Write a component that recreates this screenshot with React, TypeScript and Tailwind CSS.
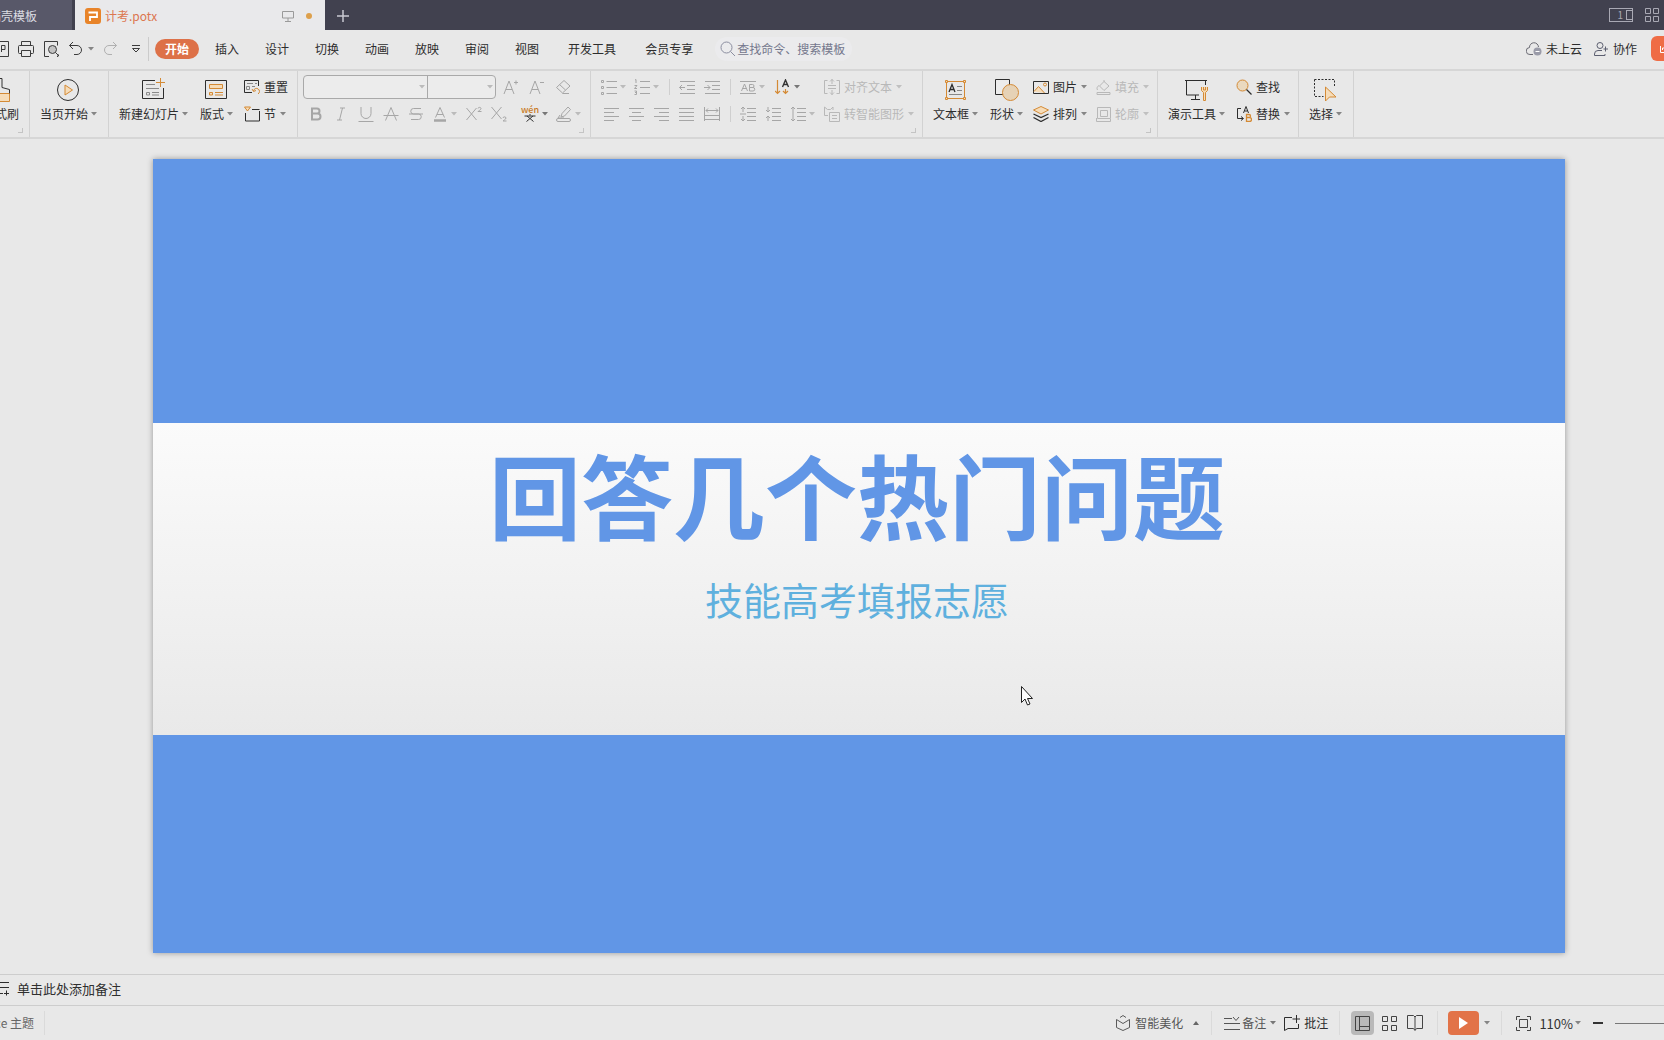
import type { ReactNode } from "react";
import clsx from "clsx";

type IconProps = {
  size?: number;
  className?: string;
  children: ReactNode;
};

const Icon = ({ size = 16, className, children }: IconProps) => (
  <svg
    width={size}
    height={size}
    viewBox={`0 0 ${size} ${size}`}
    fill="none"
    stroke="currentColor"
    strokeWidth={1}
    aria-hidden="true"
    className={clsx("shrink-0", className)}
  >
    {children}
  </svg>
);

const Caret = ({ up, className }: { up?: boolean; className?: string }) => (
  <svg
    width={6}
    height={4}
    viewBox="0 0 6 4"
    fill="currentColor"
    aria-hidden="true"
    className={clsx("shrink-0", className ?? "text-[#858585]")}
  >
    <path d={up ? "M0 4h6L3 0z" : "M0 0h6L3 3.6z"} />
  </svg>
);

const orange = "#d48a35";
const peach = "#f6dcb8";

/* ---------- ribbon building blocks ---------- */

const Group = ({
  className,
  corner,
  children,
}: {
  className?: string;
  corner?: boolean;
  children: ReactNode;
}) => (
  <div
    className={clsx(
      "relative flex h-[66px] shrink-0 items-start border-r border-[#d2d2d2]",
      className
    )}
  >
    {children}
    {corner && (
      <span className="absolute right-1.5 bottom-1 h-[5px] w-[5px] border-r border-b border-[#c4c4c4]" />
    )}
  </div>
);

const BigButton = ({
  icon,
  label,
  caret = true,
}: {
  icon: ReactNode;
  label: string;
  caret?: boolean;
}) => (
  <button className="flex shrink-0 flex-col items-center gap-1 pt-[7px]">
    {icon}
    <span className="flex items-center gap-[3px] leading-4 whitespace-nowrap">
      {label}
      {caret && <Caret />}
    </span>
  </button>
);

const SmallButton = ({
  icon,
  label,
  caret = true,
  disabled,
}: {
  icon: ReactNode;
  label: string;
  caret?: boolean;
  disabled?: boolean;
}) => (
  <button
    disabled={disabled}
    className={clsx(
      "flex h-5 items-center gap-1 whitespace-nowrap",
      disabled && "text-[#b8b8b8]"
    )}
  >
    {icon}
    {label}
    {caret && (
      <Caret className={disabled ? "text-[#c0c0c0]" : "text-[#858585]"} />
    )}
  </button>
);

const Tool = ({
  name,
  className,
  caret,
  active,
  children,
}: {
  name: string;
  className?: string;
  caret?: boolean;
  active?: boolean;
  children: ReactNode;
}) => (
  <button
    aria-label={name}
    disabled={!active}
    className={clsx(
      "flex h-5 shrink-0 items-center gap-[3px]",
      active ? "text-[#333]" : "text-[#a6a6a6]",
      className
    )}
  >
    {children}
    {caret && <Caret className={active ? "text-[#777]" : "text-[#bbb]"} />}
  </button>
);

const Rows = ({ className, children }: { className?: string; children: ReactNode }) => (
  <div className={clsx("flex flex-col gap-[7px] pt-1.5", className)}>{children}</div>
);

const Split = () => <span className="mx-[9px] h-4 w-px shrink-0 bg-[#cfcfcf]" />;

/* ---------- title bar ---------- */

const TitleBar = () => (
  <header className="flex h-[30px] items-stretch overflow-hidden bg-[#41414f]">
    <button className="flex w-[72px] shrink-0 items-center justify-end overflow-hidden bg-[#585869] pt-0.5 pr-[35px] whitespace-nowrap text-[#dcdce2]">
      稻壳模板
    </button>
    <div className="ml-[3px] flex w-[250px] shrink-0 items-center bg-[#e9e9eb] pt-0.5 pr-[13px] pl-2.5">
      <Icon size={16}>
        <rect width="16" height="16" rx="3" fill="#e8842a" stroke="none" />
        <path d="M3.500 4.500h8.500v4.500H5v4" stroke="#fff" strokeWidth="1.800" />
      </Icon>
      <span className="ml-1 text-[#dc7650]">计考.potx</span>
      <Icon size={12} className="ml-auto text-[#9a9a9a]">
        <path d="M.5 1.500h11v6.500h-11zM6 8v3M3 11.500h6" />
      </Icon>
      <span className="ml-3 h-1.5 w-1.5 rounded-full bg-[#dda04c]" />
    </div>
    <button aria-label="新建标签" className="ml-3 pt-0.5 text-[#c9c9d2]">
      <Icon size={12}>
        <path d="M6 0v12M0 6h12" strokeWidth="1.500" />
      </Icon>
    </button>
    <div className="ml-auto flex items-center gap-3 pr-1 text-[#a9a9b4]">
      <button
        aria-label="窗口"
        className="flex h-3.5 w-6 items-center justify-end border border-current text-[10px] leading-3"
      >
        1
        <span className="ml-[3px] h-2.5 w-1.5 border-y border-l border-current" />
      </button>
      <button aria-label="应用">
        <Icon size={15}>
          <path d="M.5.5h5v5h-5zM8.500.5h5v5h-5zM.5 8.500h5v5h-5zM8.500 8.500h5v5h-5z" />
        </Icon>
      </button>
    </div>
  </header>
);

/* ---------- menu bar ---------- */

const menuItems = ["插入", "设计", "切换", "动画", "放映", "审阅", "视图"];

const MenuBar = () => (
  <nav className="flex h-[39px] items-center overflow-hidden pb-0.5">
    <div className="flex shrink-0 items-center text-[#3c3c3c]">
      <button aria-label="输出为PDF" className="flex w-[9px] justify-end">
        <Icon>
          <path d="M4.500.5h11v15h-11M8.500 11V4.500h3.500v4H8.500" />
        </Icon>
      </button>
      <button aria-label="打印" className="ml-[9px]">
        <Icon>
          <path d="M3.500 4.500V.5h9v4M3.500 12.500h-2a1 1 0 0 1-1-1v-6a1 1 0 0 1 1-1h13a1 1 0 0 1 1 1v6a1 1 0 0 1-1 1h-2M3.500 9.500h9v6h-9z" />
        </Icon>
      </button>
      <button aria-label="打印预览" className="ml-2.5">
        <Icon>
          <path d="M5 15.500H.5V.5h13v4M14 13v2.500h-1" />
          <circle cx="8.500" cy="8.500" r="4" fill="#c3c3c3" />
          <path d="M11.500 11.500l3.500 3.500" />
        </Icon>
      </button>
      <button aria-label="撤销" className="ml-2 flex items-center gap-1">
        <Icon>
          <path d="M5 1L1.500 4.500 5 8M1.500 4.500h7.500a4.500 4.500 0 0 1 0 9H6" />
        </Icon>
        <Caret />
      </button>
      <button aria-label="恢复" disabled className="ml-2 text-[#b0b0b0]">
        <Icon>
          <path d="M11 1l3.500 3.500L11 8M14.500 4.500H7a4.500 4.500 0 0 0 0 9h3" />
        </Icon>
      </button>
      <button aria-label="自定义快速访问工具栏" className="ml-3.5">
        <Icon size={8}>
          <path d="M0 .5h8M.5 3.500h7L4 7z" />
        </Icon>
      </button>
      <span className="ml-2 h-6 w-px bg-[#cbcbcb]" />
    </div>

    <button className="ml-1.5 h-5 w-11 shrink-0 rounded-full bg-[#dd7148] font-bold text-white">
      开始
    </button>
    <div className="ml-4 flex shrink-0 items-center gap-[26px] whitespace-nowrap">
      {menuItems.map((item) => (
        <button key={item}>{item}</button>
      ))}
    </div>
    <div className="ml-[29px] flex shrink-0 items-center gap-[29px] whitespace-nowrap">
      <button>开发工具</button>
      <button>会员专享</button>
    </div>
    <label className="ml-[22px] flex h-6 w-[137px] shrink-0 items-center gap-px rounded-xl bg-[#ebebed] pl-[5px] text-[#8b8ea0]">
      <Icon>
        <circle cx="6.500" cy="6.500" r="5.500" />
        <path d="M10.500 10.500l4.500 4.500" />
      </Icon>
      <input
        aria-label="查找命令、搜索模板"
        placeholder="查找命令、搜索模板"
        className="w-[112px] bg-transparent outline-none placeholder:text-[#74778c]"
      />
    </label>

    <div className="ml-auto flex shrink-0 items-center">
      <button className="flex items-center gap-1 whitespace-nowrap">
        <Icon className="text-[#6b6b74]">
          <path d="M7 13.500H4A3.500 3.500 0 0 1 3.500 6.500a4.500 4.500 0 0 1 9-.5" />
          <circle cx="11.500" cy="10.500" r="4" fill="#9a9ba8" stroke="none" />
          <path d="M9.500 10.500h4" stroke="#fff" />
        </Icon>
        未上云
      </button>
      <button className="ml-3 flex items-center gap-[5px] whitespace-nowrap">
        <Icon size={14} className="text-[#5c5f70]">
          <circle cx="6" cy="3.500" r="3" />
          <path d="M8 8.500H4a3.500 3.500 0 0 0-3.500 3.500v1.500H11V12M9.500 7h4.500M11.500 4.500v5" />
        </Icon>
        协作
      </button>
      <button
        aria-label="分享"
        className="ml-3.5 flex h-[25px] w-[13px] items-center justify-end overflow-hidden rounded-l-md bg-[#ef6c45] text-white"
      >
        <svg width="4" height="8" viewBox="0 0 4 8" fill="none" stroke="currentColor">
          <path d="M.5 1v6.500H4M2.500 5V3H4" />
        </svg>
      </button>
    </div>
  </nav>
);

/* ---------- ribbon ---------- */

const StartGroups = () => (
  <>
    <Group className="w-[30px] justify-end overflow-hidden pr-2.5" corner>
      <BigButton
        label="格式刷"
        caret={false}
        icon={
          <Icon size={24}>
            <path d="M3.500 15.500h17v8h-17z" fill={peach} stroke={orange} />
            <path d="M4 15.500v-5l4-1v-9h5v9l7.500 2v4" stroke="#333" />
          </Icon>
        }
      />
    </Group>
    <Group className="w-[79px] justify-center pr-px">
      <BigButton
        label="当页开始"
        icon={
          <Icon size={24}>
            <circle cx="12" cy="12" r="10.500" />
            <path d="M9 7v10l7.500-5z" fill={peach} stroke={orange} />
          </Icon>
        }
      />
    </Group>
    <Group className="w-[189px] pl-2.5">
      <BigButton
        label="新建幻灯片"
        icon={
          <Icon size={24}>
            <path d="M13 2.500H.5v18h21V10" />
            <path d="M4 6.500h9M4 10.500h13M4.500 14.500h3v2.500h-3zM10 14.500h7M10 17h7" stroke="#8a8a8a" />
            <path d="M18.500 0v9M14 4.500h9" stroke={orange} />
          </Icon>
        }
      />
      <div className="ml-3">
        <BigButton
          label="版式"
          icon={
            <Icon size={24}>
              <path d="M.5 2.500h21v18H.5z" />
              <path d="M4.500 6.500h13v4h-13zM4.500 14.500h3v2.500h-3zM10 14.500h8M10 17h8" fill={peach} stroke={orange} />
            </Icon>
          }
        />
      </div>
      <Rows className="ml-[11px]">
        <SmallButton
          label="重置"
          caret={false}
          icon={
            <Icon>
              <path d="M8 13.500H.5v-12h14V7" />
              <path d="M3 4.500h6M11 4.500h2M2.500 7.500h3v3h-3zM8 7.500h3" stroke="#888" />
              <path d="M8 10l1.500 2.500 2.500-1M9.500 12a3 3 0 1 1 4.500 3" stroke={orange} />
            </Icon>
          }
        />
        <SmallButton
          label="节"
          icon={
            <Icon>
              <path d="M8 3.500h7.500M1.500 7v8h14V5" />
              <path d="M.5 1h6L3.500 5z" fill={peach} stroke={orange} />
            </Icon>
          }
        />
      </Rows>
    </Group>
  </>
);

const FontGroup = () => (
  <Group className="w-[293px] pl-[5px]" corner>
    <div className="flex flex-col gap-[5px] pt-1">
      <div className="flex items-center">
        <div className="mr-0.5 flex h-6 w-[193px] rounded border border-[#a9a9a9] bg-[#ececec]">
          <div className="flex flex-1 items-center border-r border-[#a9a9a9] pr-0.5">
            <select aria-label="字体" disabled className="h-full flex-1 appearance-none outline-none">
              <option> </option>
            </select>
            <Caret className="text-[#bbb]" />
          </div>
          <div className="flex w-[67px] items-center pr-0.5">
            <select aria-label="字号" disabled className="h-full flex-1 appearance-none outline-none">
              <option> </option>
            </select>
            <Caret className="text-[#bbb]" />
          </div>
        </div>
        <Tool name="增大字号" className="w-[26px] justify-center">
          <Icon>
            <path d="M1 15L6 2l5 13M3 10.500h6M11 3.500h4M13 1.500v4" />
          </Icon>
        </Tool>
        <Tool name="减小字号" className="w-[26px] justify-center">
          <Icon>
            <path d="M1 15L6 2l5 13M3 10.500h6M11 3.500h4" />
          </Icon>
        </Tool>
        <Tool name="清除格式" className="w-[26px] justify-center">
          <Icon>
            <path d="M9 1.500L15 7l-7.500 7-6-5.500zM4.500 5.500l6 5.500M7.500 14.500H14" />
          </Icon>
        </Tool>
      </div>
      <div className="flex items-center">
        <Tool name="加粗" className="w-[25px] justify-center">
          <Icon>
            <path d="M4 2.500h5a2.500 2.500 0 0 1 0 5H4zM4 7.500h5.500a3 3 0 0 1 0 6H4z" strokeWidth="2" />
          </Icon>
        </Tool>
        <Tool name="倾斜" className="w-[25px] justify-center">
          <Icon>
            <path d="M7 2h5M4 14h5M9.500 2l-3 12" />
          </Icon>
        </Tool>
        <Tool name="下划线" className="w-[25px] justify-center">
          <Icon>
            <path d="M3 1v6.500a5 5 0 0 0 10 0V1M.5 15.500h15" />
          </Icon>
        </Tool>
        <Tool name="字符底纹" className="w-[25px] justify-center">
          <Icon>
            <path d="M2.500 14.500L8 1.500l5.500 13M.5 9.500h15" />
          </Icon>
        </Tool>
        <Tool name="删除线" className="w-[25px] justify-center">
          <Icon>
            <path d="M13 2.500H5.500a2.700 2.700 0 0 0 0 5.500h5a2.700 2.700 0 0 1 0 5.500H3M1 8h14" />
          </Icon>
        </Tool>
        <Tool name="字体颜色" className="w-[33px] justify-center" caret>
          <Icon>
            <path d="M3.500 11.500L8 1.500l4.500 10M5 8.500h6" />
            <path d="M2 14.500h12" strokeWidth="2.500" />
          </Icon>
        </Tool>
        <Tool name="上标" className="w-[25px] justify-center">
          <Icon>
            <path d="M.5 2l10 12M10.500 2l-10 12M12 2.500c0-1.500 3-1.500 3 0S12 5 12 5.500h3.500" />
          </Icon>
        </Tool>
        <Tool name="下标" className="mr-1.5 w-[25px] justify-center">
          <Icon>
            <path d="M.5 1l10 12M10.500 1l-10 12M12 12c0-1.500 3-1.500 3 0s-3 2.500-3 3h3.500" />
          </Icon>
        </Tool>
        <Tool name="拼音指南" className="w-[35px] justify-center" caret active>
          <span className="flex w-[18px] flex-col items-center leading-none">
            <span className="text-[9px] leading-[8px] font-medium text-[#c87a24]">wén</span>
            <svg width="12" height="8" viewBox="0 0 12 8" fill="none" stroke="currentColor">
              <path d="M6 0v1.500M.5 2h11M3 2l6.500 5.500M9 2L2.500 7.500" />
            </svg>
          </span>
        </Tool>
        <Tool name="突出显示" className="w-[33px] justify-center" caret>
          <Icon>
            <path d="M12 1l2.500 2.500L8.500 10 5 11l1-3.500zM4 9L2 12h6" />
            <rect x=".5" y="12.500" width="14" height="3" rx="1.500" />
          </Icon>
        </Tool>
      </div>
    </div>
  </Group>
);

const ParagraphGroup = () => (
  <Group className="w-[332px]" corner>
    <Rows>
      <div className="flex items-center pl-2.5">
        <Tool name="项目符号" className="w-[33px]" caret>
          <Icon>
            <path d="M5.500 2.500H16M5.500 8.500H16M5.500 14.500H16" />
            <path d="M.5 1.500h2v2h-2zM.5 7.500h2v2h-2zM.5 13.500h2v2h-2z" />
          </Icon>
        </Tool>
        <Tool name="编号" className="w-[26px]" caret>
          <Icon>
            <path d="M6 2.500h10M6 8.500h10M6 14.500h10M1 1l1-.5V4M.5 6.500H3L.5 9.500H3M.5 12h2v3.500h-2M1 13.500h1.500" />
          </Icon>
        </Tool>
        <Split />
        <Tool name="减少缩进量" className="w-[25px]">
          <Icon>
            <path d="M1 2.500h15M8 6.500h8M8 10.500h8M1 14.500h15M6 8.500H.5M3 6L.5 8.500 3 11" />
          </Icon>
        </Tool>
        <Tool name="增加缩进量" className="w-[17px]">
          <Icon>
            <path d="M1 2.500h15M8 6.500h8M8 10.500h8M1 14.500h15M0 8.500h6M3.500 6L6 8.500 3.500 11" />
          </Icon>
        </Tool>
        <Split />
        <Tool name="字符间距" className="w-[35px]" caret>
          <Icon>
            <path d="M0 2.500h16M0 14.500h16" />
            <path d="M1.500 12L4.500 5l3 7M2.500 9.500h4M9.500 5.500h3a1.500 1.500 0 0 1 0 3h-3zM9.500 8.500h3.500a1.500 1.500 0 0 1 0 3.500H9.500z" />
          </Icon>
        </Tool>
        <Tool name="文字方向" className="w-[49px]" caret active>
          <Icon>
            <path d="M2.500 1v13.500M0 12l2.500 2.500L5 12M10.500 10v4.500M8 12l2.500 2.500L13 12" stroke={orange} strokeWidth="1.200" />
            <path d="M7.500 8l3-7 3 7M8.500 5.500h4" strokeWidth="1.400" />
          </Icon>
        </Tool>
        <SmallButton
          disabled
          label="对齐文本"
          icon={
            <Icon>
              <path d="M3.500 1.500h-3v13h3M12.500 1.500h3v13h-3M4 6.500h8M4 9.500h8M8 0v5M6 2.500L8 .5l2 2M8 11v5M6 13.500l2 2 2-2" />
            </Icon>
          }
        />
      </div>
      <div className="flex items-center pl-[13px]">
        <Tool name="左对齐" className="w-[25px]">
          <Icon>
            <path d="M0 2.500h15M0 6.500h10M0 10.500h15M0 14.500h10" />
          </Icon>
        </Tool>
        <Tool name="居中对齐" className="w-[25px]">
          <Icon>
            <path d="M0 2.500h15M3 6.500h9M0 10.500h15M3 14.500h9" />
          </Icon>
        </Tool>
        <Tool name="右对齐" className="w-[25px]">
          <Icon>
            <path d="M0 2.500h15M5 6.500h10M0 10.500h15M5 14.500h10" />
          </Icon>
        </Tool>
        <Tool name="两端对齐" className="w-[25px]">
          <Icon>
            <path d="M0 2.500h15M0 6.500h15M0 10.500h15M0 14.500h15" />
          </Icon>
        </Tool>
        <Tool name="分散对齐" className="w-[17px]">
          <Icon>
            <path d="M.5 1v14M15.500 1v14M2 4.500h12M4 2.500l-2 2 2 2M12 2.500l2 2-2 2M1 9.500h14M1 13.500h14" />
          </Icon>
        </Tool>
        <Split />
        <Tool name="增大段落行距" className="w-[25px]">
          <Icon>
            <path d="M7 2.500h9M7 6.500h9M7 10.500h9M7 14.500h9M3 1v5M1 3l2-2 2 2M3 10v5M1 13l2 2 2-2M0 8h6" />
          </Icon>
        </Tool>
        <Tool name="减小段落行距" className="w-[25px]">
          <Icon>
            <path d="M7 2.500h9M7 6.500h9M7 10.500h9M7 14.500h9M3 1v5M1 4l2 2 2-2M3 10v5M1 12l2-2 2 2" />
          </Icon>
        </Tool>
        <Tool name="行距" className="w-[34px]" caret>
          <Icon>
            <path d="M7 2.500h9M7 6.500h9M7 10.500h9M7 14.500h9M3 1v14M1 3l2-2 2 2M1 13l2 2 2-2" />
          </Icon>
        </Tool>
        <SmallButton
          disabled
          label="转智能图形"
          icon={
            <Icon>
              <path d="M4 9.500H.5V1l3 2.500h3L9 1v3M5.500 6.500h10v9h-10zM8 9.500h5M8 12.500h5" />
            </Icon>
          }
        />
      </div>
    </Rows>
  </Group>
);

const InsertGroup = () => (
  <Group className="w-[235px] pl-2.5" corner>
    <BigButton
      label="文本框"
      icon={
        <Icon size={24}>
          <path d="M2.500 4v16M20.500 4v16M3 3.500h17M3 20.500h17" stroke={orange} />
          <path d="M1.500 2.500h2v2h-2zM19.500 2.500h2v2h-2zM1.500 19.500h2v2h-2zM19.500 19.500h2v2h-2z" fill={peach} stroke={orange} />
          <path d="M5 14l3-7.500 3 7.500M6 11.500h4" strokeWidth="1.300" />
          <path d="M13 8.500h5M13 12.500h5M5 16.500h13" stroke="#888" />
        </Icon>
      }
    />
    <div className="ml-3">
      <BigButton
        label="形状"
        icon={
          <Icon size={24}>
            <path d="M.5 1.500h14v15H.5z" fill="#ececec" />
            <circle cx="15.500" cy="14.500" r="8" fill="#e6d2b6" stroke={orange} />
          </Icon>
        }
      />
    </div>
    <Rows className="ml-2.5">
      <SmallButton
        label="图片"
        icon={
          <Icon>
            <path d="M.5 2.500h15v12H.5z" />
            <path d="M1 12.500l4.500-5 6 6.500" stroke={orange} fill={peach} />
            <circle cx="12" cy="5.500" r="1.500" stroke={orange} />
          </Icon>
        }
      />
      <SmallButton
        label="排列"
        icon={
          <Icon>
            <path d="M.5 8L8 11.500 15.500 8M.5 11.500L8 15.500l7.500-4" strokeWidth="1.300" />
            <path d="M8 .5L15.500 4 8 8 .5 4z" fill={peach} stroke={orange} />
          </Icon>
        }
      />
    </Rows>
    <Rows className="ml-[9px]">
      <SmallButton
        disabled
        label="填充"
        icon={
          <Icon size={15}>
            <path d="M3.500 6L8 1.500 13 6l-5 4.500zM8 2V0M3 5.500c-2 1-2.500 3-1.500 4.500M1 14.500h13V12.500H1z" />
          </Icon>
        }
      />
      <SmallButton
        disabled
        label="轮廓"
        icon={
          <Icon size={15}>
            <path d="M1.500.5h13v11h-13zM4.500 3.500h7v6h-7zM.5 11v3.500h14V12" />
          </Icon>
        }
      />
    </Rows>
  </Group>
);

const ToolGroups = () => (
  <>
    <Group className="w-[141px] pl-2.5">
      <BigButton
        label="演示工具"
        icon={
          <Icon size={24}>
            <path d="M0 2.500h22M1.500 3v14H14M20.500 3v4M10.500 17v4M6 21.500h9" />
            <path d="M16.500 9v3.500l2 2v8h2v-8l2-2V9M18.500 9v3h2V9" stroke={orange} fill={peach} />
          </Icon>
        }
      />
      <Rows className="ml-[11px]">
        <SmallButton
          label="查找"
          caret={false}
          icon={
            <Icon>
              <circle cx="6.500" cy="6.500" r="5.500" fill="#ead9bf" stroke={orange} />
              <path d="M10.500 10.500l5 5" strokeWidth="1.300" />
            </Icon>
          }
        />
        <SmallButton
          label="替换"
          icon={
            <Icon>
              <path d="M5 2.500H1.500v10H7M5 10.500l2.500 2L5 14.500M7.500 7L10 .5 12.500 7M8.500 5h3" />
              <path d="M10.500 8.500h2.500a1.500 1.500 0 0 1 0 3h-2.500zM10.500 11.500h3a2 2 0 0 1 0 4h-3z" stroke={orange} strokeWidth="1.300" />
            </Icon>
          }
        />
      </Rows>
    </Group>
    <Group className="w-[55px] pl-2.5">
      <BigButton
        label="选择"
        icon={
          <Icon size={24}>
            <path d="M.5 1.500h20v8M.5 1.500v17h9" strokeDasharray="2 1.500" />
            <path d="M11.500 9v14l4-4H22z" fill={peach} stroke={orange} />
          </Icon>
        }
      />
    </Group>
  </>
);

const Ribbon = () => (
  <div className="flex overflow-hidden border-t-2 border-b-2 border-[#d6d6d6]">
    <StartGroups />
    <FontGroup />
    <ParagraphGroup />
    <InsertGroup />
    <ToolGroups />
  </div>
);

/* ---------- slide ---------- */

const Slide = () => (
  <main className="flex-1 pt-5 pr-[99px] pb-[21px] pl-[153px]">
    <div className="relative grid aspect-video grid-rows-[264fr_312fr_218fr] bg-[#6196e6] shadow-[0_0_6px_rgba(0,0,0,0.35)]">
      <div />
      <div className="bg-linear-to-b from-[#fbfbfb] to-[#e9e9e9] pt-[18px] pr-1 text-center">
        <h1 className="text-[92px] leading-[104px] font-bold text-[#6196e6]">
          回答几个热门问题
        </h1>
        <p className="mt-[30px] text-[38px] leading-[48px] text-[#5fb0de]">
          技能高考填报志愿
        </p>
      </div>
      <div />
      <svg
        width="12"
        height="20"
        viewBox="0 0 12 20"
        aria-hidden="true"
        className="absolute top-[66.4%] left-[61.5%]"
      >
        <path
          d="M.5.5v16l3.500-3.500 2.500 6 2.500-1-2.500-5.500h5z"
          fill="#fff"
          stroke="#222"
        />
      </svg>
    </div>
  </main>
);

/* ---------- notes and status bar ---------- */

const Notes = () => (
  <label className="flex h-[31px] items-center overflow-hidden border-t border-[#cdcdcd] pb-1">
    <span className="flex w-[9px] shrink-0 justify-end">
      <Icon>
        <path d="M2 2.500h14M2 7.500h14M2 13.500h8M13.500 10.500v5M11 13.500h5" />
      </Icon>
    </span>
    <input
      aria-label="备注"
      placeholder="单击此处添加备注"
      className="ml-2 flex-1 bg-transparent text-[13px] outline-none placeholder:text-[#2f2f2f]"
    />
  </label>
);

const StatusSplit = ({ className }: { className?: string }) => (
  <span className={clsx("h-6 w-px shrink-0 bg-[#dadada]", className)} />
);

const StatusBar = () => (
  <footer className="flex h-[35px] items-center overflow-hidden border-t border-[#cdcdcd] text-[#555]">
    <span className="flex w-[34px] shrink-0 justify-end whitespace-nowrap text-[#666]">
      Office 主题
    </span>
    <StatusSplit className="ml-2.5" />

    <div className="ml-auto flex shrink-0 items-center whitespace-nowrap">
      <button className="flex items-center gap-1">
        <Icon className="text-[#5a5a5a]">
          <path d="M5 2.500L8 .5l3 2M1.500 4.500v8L8 15.500l6.500-3v-8M1.500 4.500L8 8.500l6.500-4" />
        </Icon>
        智能美化
        <Caret up className="ml-1.5 text-[#666]" />
      </button>
      <StatusSplit className="mx-3" />
      <button className="flex items-center gap-0.5">
        <Icon>
          <path d="M0 3.500h8M0 8.500h16M0 14.500h16M9 2l3 3.500L15 2" />
        </Icon>
        备注
        <Caret className="ml-0.5 text-[#777]" />
      </button>
      <button className="ml-2 flex items-center gap-1 text-[#2d2d2d]">
        <Icon>
          <path d="M8 2.500H.5v13L4 13.500h10.500V9M12.500 0v8M8.500 4H16" />
        </Icon>
        批注
      </button>
      <StatusSplit className="mx-[11px]" />
      <button
        aria-label="普通视图"
        className="flex h-6 w-[23px] items-center justify-center rounded bg-[#b9b9b9] text-[#444]"
      >
        <Icon size={15}>
          <path d="M.5.5h14v14H.5zM4.500.5v14M4.500 10.500h10" />
        </Icon>
      </button>
      <button aria-label="幻灯片浏览" className="ml-2 text-[#444]">
        <Icon size={15}>
          <path d="M.5.5h5v5h-5zM9.500.5h5v5h-5zM.5 9.500h5v5h-5zM9.500 9.500h5v5h-5z" />
        </Icon>
      </button>
      <button aria-label="阅读视图" className="ml-2.5 text-[#444]">
        <Icon>
          <path d="M8 2L6.500.5h-6v13h6L8 15.500l1.500-2h6V.5h-6zM8 2v13" />
        </Icon>
      </button>
      <StatusSplit className="ml-3.5" />
      <button
        aria-label="从当前幻灯片开始播放"
        className="ml-2.5 flex h-6 w-[31px] items-center justify-center rounded bg-[#e27348] text-white"
      >
        <svg width="9" height="12" viewBox="0 0 9 12" fill="currentColor">
          <path d="M0 0v12l9-6z" />
        </svg>
      </button>
      <button aria-label="播放选项" className="ml-[5px] flex h-6 items-center">
        <Caret />
      </button>
      <StatusSplit className="ml-[11px]" />
      <button aria-label="最佳显示比例" className="ml-3.5 text-[#444]">
        <Icon size={15}>
          <path d="M4 .5H.5V4M11 .5h3.500V4M4 14.500H.5V11M11 14.500h3.500V11M3.500 3.500h8v8h-8z" />
        </Icon>
      </button>
      <button className="ml-2 flex items-center gap-0.5 text-[13px] text-[#333]">
        110%
        <Caret />
      </button>
      <button aria-label="缩小" className="ml-3 flex h-6 items-center">
        <span className="h-0.5 w-2.5 bg-[#333]" />
      </button>
      <div className="ml-3 flex w-[49px] items-center overflow-hidden">
        <input
          type="range"
          aria-label="缩放"
          min={0}
          max={100}
          defaultValue={60}
          className="h-px w-[120px] shrink-0 appearance-none bg-[#777] [&::-webkit-slider-thumb]:h-2 [&::-webkit-slider-thumb]:w-2 [&::-webkit-slider-thumb]:appearance-none"
        />
      </div>
    </div>
  </footer>
);

const App = () => {
  return (
    <div className="flex min-h-screen flex-col overflow-hidden bg-[#e8e8e8] font-['Noto_Sans_CJK_SC','Noto_Sans',sans-serif] text-xs text-[#2d2d2d]">
      <TitleBar />
      <MenuBar />
      <Ribbon />
      <Slide />
      <Notes />
      <StatusBar />
    </div>
  );
};

export default App;
